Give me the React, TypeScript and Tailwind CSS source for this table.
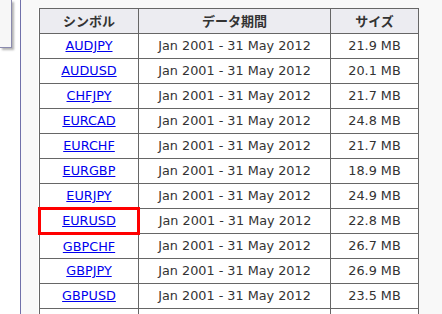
import React from "react";

const rows: [string, string][] = [
  ["AUDJPY", "21.9 MB"],
  ["AUDUSD", "20.1 MB"],
  ["CHFJPY", "21.7 MB"],
  ["EURCAD", "24.8 MB"],
  ["EURCHF", "21.7 MB"],
  ["EURGBP", "18.9 MB"],
  ["EURJPY", "24.9 MB"],
  ["EURUSD", "22.8 MB"],
  ["GBPCHF", "26.7 MB"],
  ["GBPJPY", "26.9 MB"],
  ["GBPUSD", "23.5 MB"],
];

export default function App() {
  return (
    <div
      className="flex h-[314px] w-[442px] overflow-hidden bg-white"
      style={{ fontFamily: '"DejaVu Sans", "Noto Sans CJK JP", sans-serif' }}
    >
      <div className="w-[20px] shrink-0 bg-white">
        <div className="h-[48px] w-[12px] border-r border-b border-[#8a8aae] bg-[#f7f7f7] shadow-[2px_2px_2px_rgba(0,0,0,0.3)]" />
      </div>
      <div className="flex-1 border-l border-[#7070aa] bg-[#f8f8f8] pl-[17px] pt-[8px]">
        <table className="w-[379px] table-fixed border-collapse bg-white text-[12.8px] text-[#333]">
          <colgroup>
            <col className="w-[99px]" />
            <col className="w-[192px]" />
            <col className="w-[88px]" />
          </colgroup>
          <thead>
            <tr className="h-[25px] bg-[#ececf1]">
              <th className="border border-[#666] p-0 text-center text-[13px] font-bold text-[#333]" style={{ fontFamily: '"Noto Sans CJK JP", sans-serif' }}>シンボル</th>
              <th className="border border-[#666] p-0 text-center text-[13px] font-bold text-[#333]" style={{ fontFamily: '"Noto Sans CJK JP", sans-serif' }}>データ期間</th>
              <th className="border border-[#666] p-0 text-center text-[13px] font-bold text-[#333]" style={{ fontFamily: '"Noto Sans CJK JP", sans-serif' }}>サイズ</th>
            </tr>
          </thead>
          <tbody>
            {rows.map(([sym, size]) => {
              const hl = sym === "EURUSD";
              return (
                <tr key={sym} className="h-[25px]">
                  <td
                    className={
                      hl
                        ? "border-[3px] border-[#ff0000] p-0 text-center"
                        : "border border-[#666] p-0 text-center"
                    }
                  >
                    <a href="#" className="text-[#0000ee] underline">
                      {sym}
                    </a>
                  </td>
                  <td className="border border-[#666] p-0 text-center">Jan 2001 - 31 May 2012</td>
                  <td className="border border-[#666] p-0 text-center">{size}</td>
                </tr>
              );
            })}
            <tr className="h-[25px]">
              <td className="border border-[#666] p-0" />
              <td className="border border-[#666] p-0" />
              <td className="border border-[#666] p-0" />
            </tr>
          </tbody>
        </table>
      </div>
    </div>
  );
}
